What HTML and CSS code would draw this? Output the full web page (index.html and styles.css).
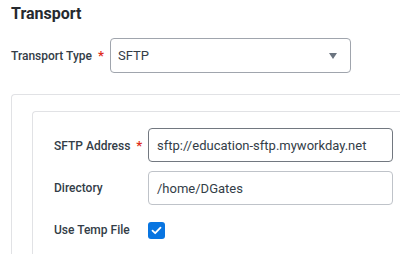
FILE: index.html
```html
<!DOCTYPE html>
<html lang="en">

<head>
    <meta charset="UTF-8">
    <title>Transport</title>
    <link rel="stylesheet" href="styles.css">
</head>

<body>
    <div class="page">
        <h2 class="title">Transport</h2>
        <div class="row top-row">
            <label class="label top-label">Transport Type <span class="req">*</span></label>
            <div class="select">
                <span>SFTP</span>
                <span class="caret"></span>
            </div>
        </div>
        <div class="outer">
            <div class="inner">
                <div class="row">
                    <label class="label">SFTP Address <span class="req">*</span></label>
                    <div class="input dark">sftp://education-sftp.myworkday.net</div>
                </div>
                <div class="row">
                    <label class="label">Directory</label>
                    <div class="input">/home/DGates</div>
                </div>
                <div class="row check-row">
                    <label class="label">Use Temp File</label>
                    <span class="checkbox">
                        <svg width="11" height="9" viewBox="0 0 11 9">
                            <path d="M1.5 4.6 L4.2 7.2 L9.5 1.6" fill="none" stroke="#fff" stroke-width="1.8" stroke-linecap="round" stroke-linejoin="round"/>
                        </svg>
                    </span>
                </div>
            </div>
        </div>
    </div>
</body>

</html>
```

FILE: styles.css
```css
* {
    padding: 0;
    margin: 0;
    box-sizing: border-box;
}

html,
body {
    width: 400px;
    height: 254px;
    overflow: hidden;
    background: #fff;
}

body {
    font-family: Roboto, "Liberation Sans", sans-serif;
    color: #333d47;
}

.page {
    padding: 0 0 0 11px;
}

.title {
    font-size: 16px;
    font-weight: 700;
    color: #262a2f;
    line-height: 20px;
    padding-top: 4px;
}

.row {
    display: flex;
    align-items: center;
}

.top-row {
    margin-top: 14px;
}

.label {
    font-size: 12px;
    font-weight: 500;
    width: 94px;
    flex-shrink: 0;
    white-space: nowrap;
}

.top-label {
    width: 99px;
}

.req {
    color: #de2e21;
    font-weight: 700;
    font-size: 13px;
    margin-left: 3px;
}

.select {
    width: 241px;
    height: 35px;
    border: 1px solid #a0a5ad;
    border-radius: 4px;
    display: flex;
    align-items: center;
    justify-content: space-between;
    padding: 0 13px 0 7px;
    font-size: 13px;
    color: #333d47;
}

.caret {
    width: 0;
    height: 0;
    border-left: 4px solid transparent;
    border-right: 4px solid transparent;
    border-top: 6px solid #6b7480;
    margin-top: 1px;
}

.outer {
    margin-top: 21px;
    height: 160px;
    border: 1px solid #e1e2e5;
    border-right: none;
    border-bottom: none;
    border-radius: 4px 0 0 0;
    padding: 16px 0 0 20px;
}

.inner {
    border: 1px solid #e1e2e5;
    border-right: none;
    border-bottom: none;
    border-radius: 4px 0 0 0;
    height: 143px;
    padding: 16px 0 0 21px;
}

.inner .row + .row {
    margin-top: 9px;
}

.input {
    width: 245px;
    height: 34px;
    border: 1px solid #bfc3c9;
    border-radius: 4px;
    display: flex;
    align-items: center;
    padding: 0 8px;
    font-size: 13px;
    color: #333d47;
}

.input.dark {
    border-color: #727880;
}

.check-row {
    height: 32px;
}

.checkbox {
    width: 17px;
    height: 17px;
    border-radius: 3px;
    background: #0875e1;
    display: flex;
    align-items: center;
    justify-content: center;
}
```
